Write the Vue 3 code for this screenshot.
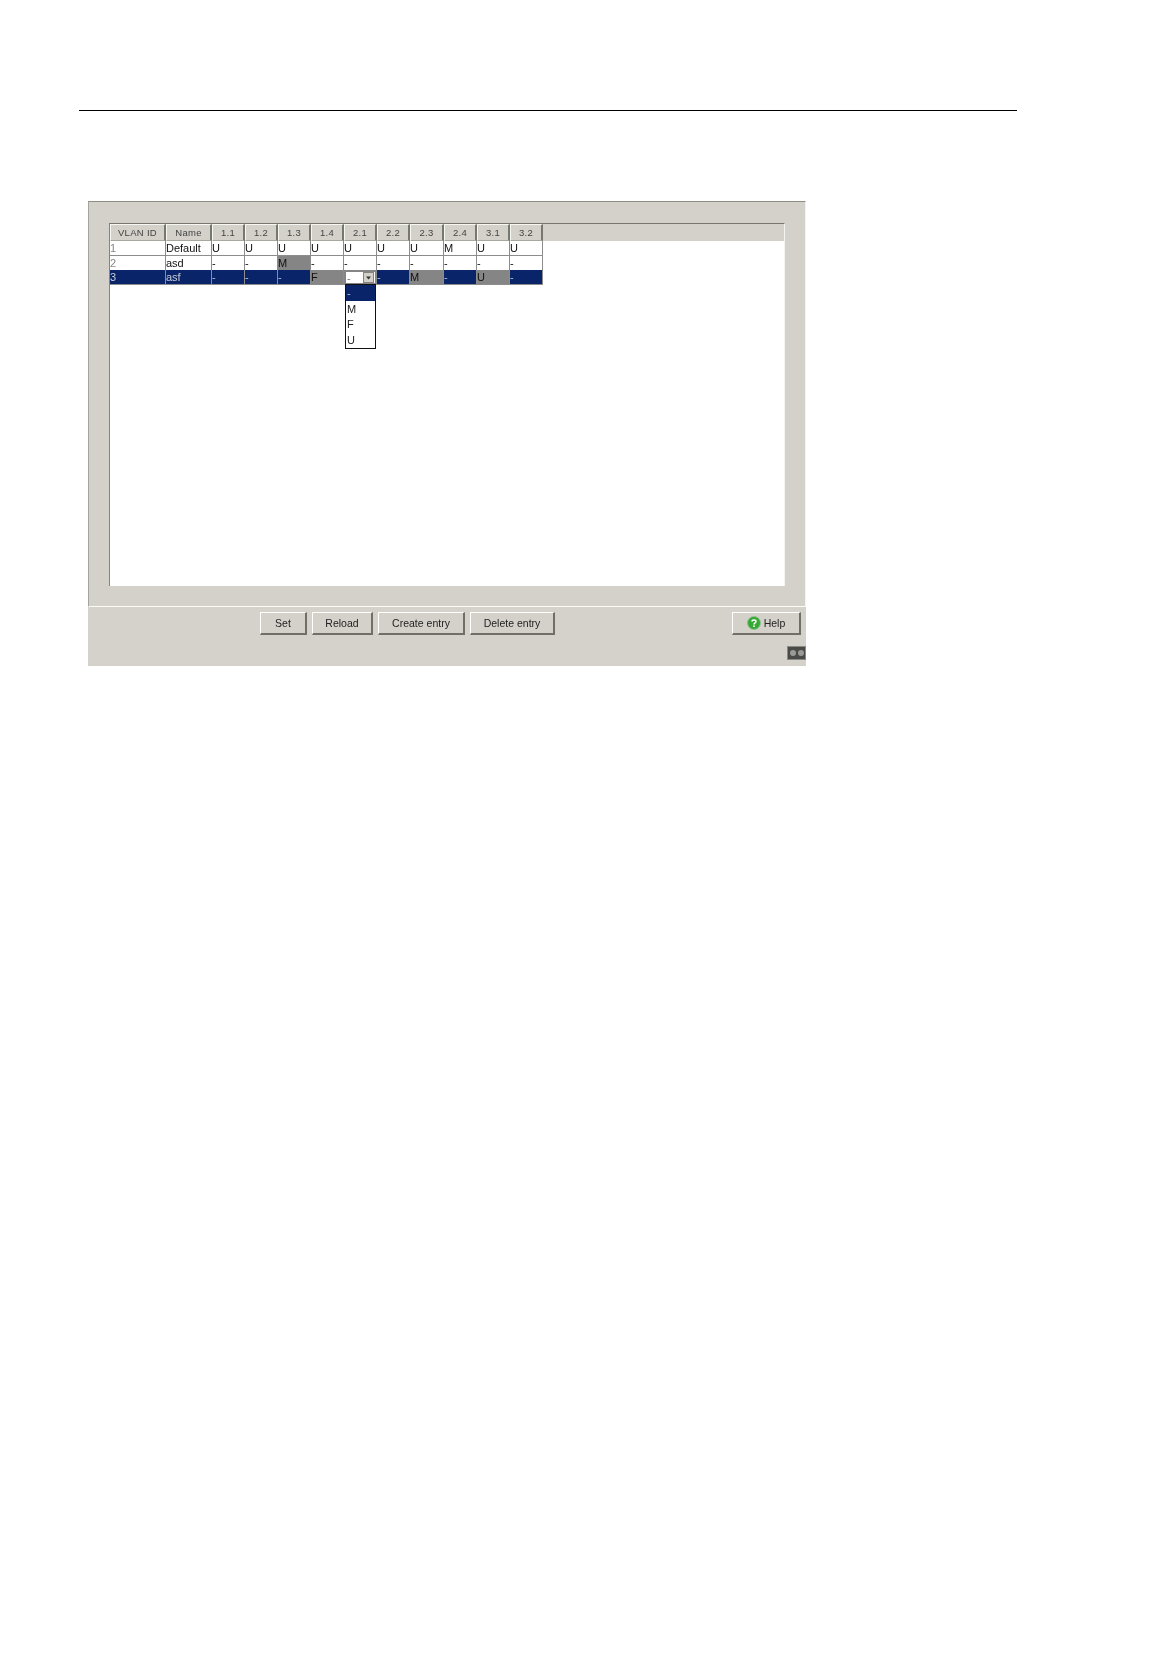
<template>
  <div class="page">
    <div class="rule"></div>

    <div class="dialog">
      <div class="panel">
        <div class="table-box">
          <div class="head-row">
            <div v-for="c in columns" :key="c" class="head-cell">{{ c }}</div>
          </div>

          <div
            v-for="row in rows"
            :key="row.id"
            class="row"
            :class="{ selected: row.selected }"
          >
            <div class="cell id-cell">{{ row.id }}</div>
            <div class="cell name-cell">{{ row.name }}</div>
            <div
              v-for="(v, i) in row.ports"
              :key="i"
              class="cell"
              :class="{ changed: row.changed.includes(i) }"
            >
              <div v-if="row.selected && i === 4" class="combo">
                <span class="combo-value">-</span>
                <span class="combo-arrow">
                  <svg width="7" height="7" viewBox="0 0 7 7"><path d="M1 2.5h5L3.5 5.5z" fill="#333" /></svg>
                </span>
                <div class="dropdown">
                  <div v-for="(o, n) in options" :key="o" class="option" :class="{ active: n === 0 }">{{ o }}</div>
                </div>
              </div>
              <template v-else>{{ v }}</template>
            </div>
          </div>
        </div>
      </div>

      <div class="footer">
        <div class="buttons">
          <button class="btn btn-set">Set</button>
          <button class="btn btn-reload">Reload</button>
          <button class="btn btn-create">Create entry</button>
          <button class="btn btn-delete">Delete entry</button>
        </div>
        <button class="btn btn-help">
          <svg width="14" height="14" viewBox="0 0 14 14">
            <circle cx="7" cy="7" r="6.5" fill="#35a835" stroke="#8fbf8f" />
            <path d="M5 5.4C5 3.4 9 3.4 9 5.4C9 6.9 7 6.8 7 8.4" fill="none" stroke="#fff" stroke-width="1.5" />
            <rect x="6.2" y="9.4" width="1.6" height="1.6" fill="#fff" />
          </svg>
          Help
        </button>
        <div class="status">
          <span class="dot"></span>
          <span class="dot"></span>
        </div>
      </div>
    </div>
  </div>
</template>

<script setup>
const columns = ['VLAN ID', 'Name', '1.1', '1.2', '1.3', '1.4', '2.1', '2.2', '2.3', '2.4', '3.1', '3.2']
const options = ['-', 'M', 'F', 'U']

const rows = [
  { id: 1, name: 'Default', ports: ['U', 'U', 'U', 'U', 'U', 'U', 'U', 'M', 'U', 'U'], changed: [] },
  { id: 2, name: 'asd', ports: ['-', '-', 'M', '-', '-', '-', '-', '-', '-', '-'], changed: [2] },
  { id: 3, name: 'asf', ports: ['-', '-', '-', 'F', '-', '-', 'M', '-', 'U', '-'], changed: [3, 4, 6, 8], selected: true },
]
</script>

<style>
html,
body {
  background: #fff;
}
</style>

<style scoped>
.page {
  height: 1668px;
  padding: 110px 0 0 79px;
  box-sizing: border-box;
  background: #fff;
  font-family: "Liberation Sans", Arial, sans-serif;
  overflow: hidden;
}

.rule {
  width: 938px;
  height: 1px;
  background: #000;
}

.dialog {
  width: 718px;
  margin: 90px 0 0 9px;
  background: #d4d2ca;
  filter: blur(0.25px);
}

.panel {
  height: 406px;
  box-sizing: border-box;
  padding: 21px 20px 20px 20px;
  background: #d4d1ca;
  border-top: 1px solid #8e8e86;
  border-left: 1px solid #a5a59d;
  border-right: 1px solid #f4f4f0;
  border-bottom: 1px solid #fbfbf8;
}

.table-box {
  height: 100%;
  width: 676px;
  box-sizing: border-box;
  background: #fff;
  border-left: 1px solid #85857e;
  border-top: 1px solid #77776f;
  border-right: 1px solid #f4f4f0;
}

.head-row,
.row {
  display: grid;
  grid-template-columns: 56px 46px 33px 33px 33px 33px 33px 33px 34px 33px 33px 33px;
}

.head-row {
  height: 17px;
  background: #d4d1ca;
}

.head-cell {
  box-sizing: border-box;
  display: flex;
  align-items: center;
  justify-content: center;
  border-top: 1px solid #f6f6f3;
  border-left: 1px solid #f6f6f3;
  border-right: 2px solid #77776f;
  border-bottom: 1px solid #a8a8a0;
  font-size: 9.5px;
  letter-spacing: 0.3px;
  color: #444;
}

.row {
  height: 14.6px;
  font-size: 11px;
  color: #111;
}

.cell {
  position: relative;
  box-sizing: border-box;
  line-height: 14px;
  border-right: 1px solid #8c8c8c;
  border-bottom: 1px solid #8c8c8c;
  background: #fff;
}

.id-cell {
  color: #8d8585;
}

.row.selected .cell {
  background: #0a246a;
  color: #b9c0d6;
}

.row.selected .id-cell,
.row.selected .name-cell {
  color: #c8cbd8;
}

.row .cell.changed,
.row.selected .cell.changed {
  background: #858585;
  color: #111;
}

.combo {
  display: flex;
  align-items: center;
  justify-content: space-between;
  position: absolute;
  left: 2px;
  right: 1px;
  top: 2px;
  height: 11px;
  background: #fff;
  color: #777;
}

.combo-value {
  padding-left: 1px;
}

.combo-arrow {
  display: flex;
  align-items: center;
  justify-content: center;
  width: 9px;
  height: 9px;
  margin-right: 1px;
  background: #d4d1ca;
  border: 1px solid #85857e;
}

.dropdown {
  position: absolute;
  z-index: 2;
  left: -1px;
  top: 12px;
  width: 31px;
  box-sizing: border-box;
  background: #fff;
  border: 1px solid #111;
}

.option {
  height: 15.6px;
  box-sizing: border-box;
  padding: 1px 0 0 1px;
  line-height: 15px;
  color: #222;
}

.option.active {
  background: #0a246a;
  color: #b9c0d6;
}

.footer {
  position: relative;
  display: flex;
  align-items: flex-start;
  height: 59px;
  box-sizing: border-box;
  padding: 5px 5px 0 172px;
}

.buttons {
  display: flex;
  gap: 5px;
  flex: 1;
}

.btn {
  height: 23px;
  padding: 0;
  box-sizing: border-box;
  background: #d4d1ca;
  border-top: 1px solid #fff;
  border-left: 1px solid #fff;
  border-right: 2px solid #6f6f68;
  border-bottom: 2px solid #6f6f68;
  font-family: inherit;
  font-size: 10.5px;
  color: #222;
}

.btn-set {
  width: 47px;
}

.btn-reload {
  width: 61px;
}

.btn-create {
  width: 87px;
}

.btn-delete {
  width: 85px;
}

.btn-help {
  display: flex;
  align-items: center;
  justify-content: center;
  gap: 3px;
  width: 69px;
}

.status {
  position: absolute;
  right: 0;
  bottom: 6px;
  display: flex;
  align-items: center;
  justify-content: center;
  gap: 2px;
  width: 19px;
  height: 14px;
  background: #4a4a48;
  border: 1px solid #8a8a84;
  box-sizing: border-box;
}

.dot {
  width: 6px;
  height: 6px;
  border-radius: 50%;
  background: #9a9a96;
}
</style>
